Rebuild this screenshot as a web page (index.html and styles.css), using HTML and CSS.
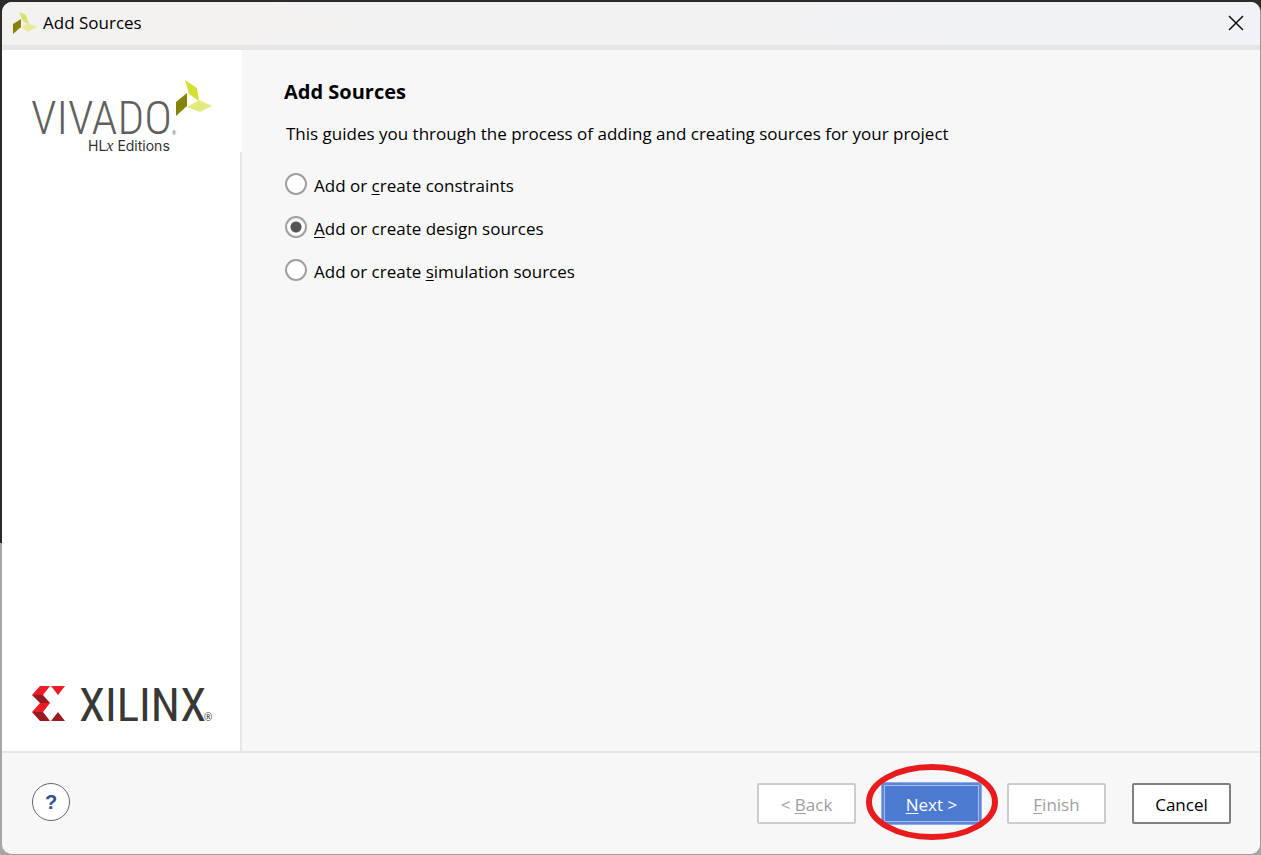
FILE: index.html
```html
<!DOCTYPE html>
<html lang="en">
<head>
<meta charset="utf-8">
<title>Add Sources</title>
<link rel="stylesheet" href="styles.css">
</head>
<body>
<div class="desktop">
<main class="dialog">
  <header class="titlebar">
    <svg class="app-icon" viewBox="0 0 24 22" aria-hidden="true">
      <path fill="#d9e26a" d="M6 0l7 3 3 10-6-4z"/>
      <path fill="#868407" d="M0 12l8-5v8l-8 7z"/>
      <path fill="#e6ea9c" d="M8 15l7-4 9 4-9 5z"/>
    </svg>
    <span class="title">Add Sources</span>
    <button class="close" type="button" aria-label="Close">
      <svg viewBox="0 0 16 16" aria-hidden="true"><path d="M1 1l14 14M15 1L1 15"/></svg>
    </button>
  </header>
  <div class="body">
    <aside class="sidebar">
      <svg class="vivado" viewBox="0 0 184 80" role="img" aria-label="Vivado HLx Editions">
        <text class="vivado-name" x="-1" y="54">VIVADO</text>
        <text class="vivado-dot" x="140" y="55">®</text>
        <text class="vivado-edition" x="56" y="71">HL<tspan class="vivado-x">x</tspan> Editions</text>
        <path fill="#d3df35" d="M153 0l12 8 2 13-10-7z"/>
        <path fill="#868407" d="M144 22l11-9v13l-11 10z"/>
        <path fill="#e2ea7d" d="M155 27l12-7 13 6-12 6z"/>
      </svg>
      <svg class="xilinx" viewBox="0 -20 184 70" role="img" aria-label="Xilinx">
        <path fill="#ed1c24" d="M8 1H18L11 10H0zM19 1H33L26 10zM8 18H18L11 27H0z"/>
        <path fill="#9b1921" d="M0 10H11L18 18H8zM0 27H11L18 36H8zM19 36L26 27L33 36z"/>
        <text class="xilinx-name" x="47" y="36">XILINX</text>
        <text class="xilinx-mark" x="172" y="36">®</text>
      </svg>
    </aside>
    <section class="content">
      <h1>Add Sources</h1>
      <p>This guides you through the process of adding and creating sources for your project</p>
      <form class="options">
        <label><input type="radio" name="kind"><span>Add or <u>c</u>reate constraints</span></label>
        <label><input type="radio" name="kind" checked><span><u>A</u>dd or create design sources</span></label>
        <label><input type="radio" name="kind"><span>Add or create <u>s</u>imulation sources</span></label>
      </form>
    </section>
  </div>
  <footer class="footer">
    <button class="help" type="button" aria-label="Help">?</button>
    <div class="actions">
      <button class="btn" type="button" disabled><span>&lt; <u>B</u>ack</span></button>
      <div class="next-wrap">
        <button class="btn primary" type="button"><span><u>N</u>ext &gt;</span></button>
        <svg class="highlight" viewBox="0 0 134 78" aria-hidden="true"><ellipse cx="67" cy="39" rx="63" ry="35"/></svg>
      </div>
      <button class="btn" type="button" disabled><span><u>F</u>inish</span></button>
      <button class="btn cancel" type="button"><span>Cancel</span></button>
    </div>
  </footer>
</main>
</div>
</body>
</html>
```
FILE: styles.css
```css
* { box-sizing: border-box; }
body {
  margin: 0;
  font-family: "Open Sans", "Noto Sans", sans-serif;
  font-size: 17px;
  line-height: 24px;
  color: #000;
}
button { font: inherit; padding: 0; }
u { text-decoration-thickness: 1px; text-underline-offset: 2px; }
.desktop {
  display: flex;
  min-height: 100vh;
  padding: 2px 0 0 2px;
  background: linear-gradient(#2b2b2b 0 543px, #a6a6a6 543px);
}
.dialog {
  flex: 1;
  display: flex;
  flex-direction: column;
  border-right: 1px solid #999;
  border-bottom: 1px solid #999;
  border-radius: 10px;
  background: #f7f7f7;
  overflow: hidden;
}
.titlebar {
  display: flex;
  align-items: center;
  height: 48px;
  padding: 0 16px 2px 11px;
  border-bottom: 5px solid #e6e6e6;
  background: linear-gradient(90deg, #f4f2f0, #f0f2f5);
}
.app-icon { width: 24px; height: 22px; }
.title { flex: 1; padding-left: 6px; }
.close { width: 16px; height: 16px; border: 0; background: none; }
.close svg { display: block; fill: none; stroke: #111; stroke-width: 1.5; }
.body { flex: 1; display: flex; }
.sidebar {
  display: flex;
  flex-direction: column;
  justify-content: space-between;
  width: 240px;
  padding: 30px 26px 16px 30px;
  background: linear-gradient(#e6e6e6, #e6e6e6) right 0 top 102px / 2px 100% no-repeat, #fff;
}
.vivado { width: 184px; height: 80px; }
.xilinx { width: 184px; height: 70px; }
.vivado-name {
  font-family: "Roboto Condensed", "Open Sans", sans-serif;
  font-size: 47px;
  font-weight: 300;
  fill: #606060;
}
.vivado-dot { font-size: 5px; fill: #606060; }
.vivado-edition { font: 14px "Inter", sans-serif; fill: #333; }
.vivado-x { font: italic 16px "Liberation Serif", serif; }
.xilinx-name {
  font-family: "Roboto Condensed", "Open Sans", sans-serif;
  font-size: 47px;
  fill: #383836;
}
.xilinx-mark { font-size: 10px; fill: #383836; }
.content { flex: 1; padding: 29px 42px; }
h1 { margin: 0; font-size: 20px; line-height: 26px; }
p { margin: 17px 0 0 2px; }
.options { display: flex; flex-direction: column; gap: 18px; margin-top: 27px; }
.options label { display: flex; align-items: center; gap: 7px; }
.options input {
  appearance: none;
  width: 22px;
  height: 22px;
  margin: 0 0 3px 1px;
  border: 2px solid #a0a0a0;
  border-radius: 50%;
  background: #fff;
}
.options input:checked { background: radial-gradient(circle, #555 5px, #fff 6px); }
.footer {
  display: flex;
  align-items: center;
  justify-content: space-between;
  height: 103px;
  padding: 0 29px 0 30px;
  border-top: 2px solid #e6e6e6;
}
.help {
  width: 38px;
  height: 38px;
  margin-bottom: 3px;
  border: 1px solid #666;
  border-radius: 50%;
  background: #fff;
  color: #2f4e8c;
  font: bold 20px "Liberation Sans", sans-serif;
}
.actions { display: flex; gap: 26px; }
.btn {
  display: block;
  width: 99px;
  height: 41px;
  padding-top: 2px;
  border: 2px solid #ccc;
  border-radius: 2px;
  background: #fff;
  color: #a0a0a0;
}
.next-wrap { position: relative; }
.primary {
  border: 2px solid #5d86d8;
  outline: 1px solid #8eabe2;
  background: #4d7bd1;
  box-shadow: inset 0 0 0 1px #a5bce8;
  color: #fff;
}
.cancel { border-color: #808080; color: #000; }
.highlight {
  position: absolute;
  top: -20px;
  left: -17px;
  width: 134px;
  height: 78px;
  fill: none;
  stroke: #e81c1c;
  stroke-width: 6;
}
```
